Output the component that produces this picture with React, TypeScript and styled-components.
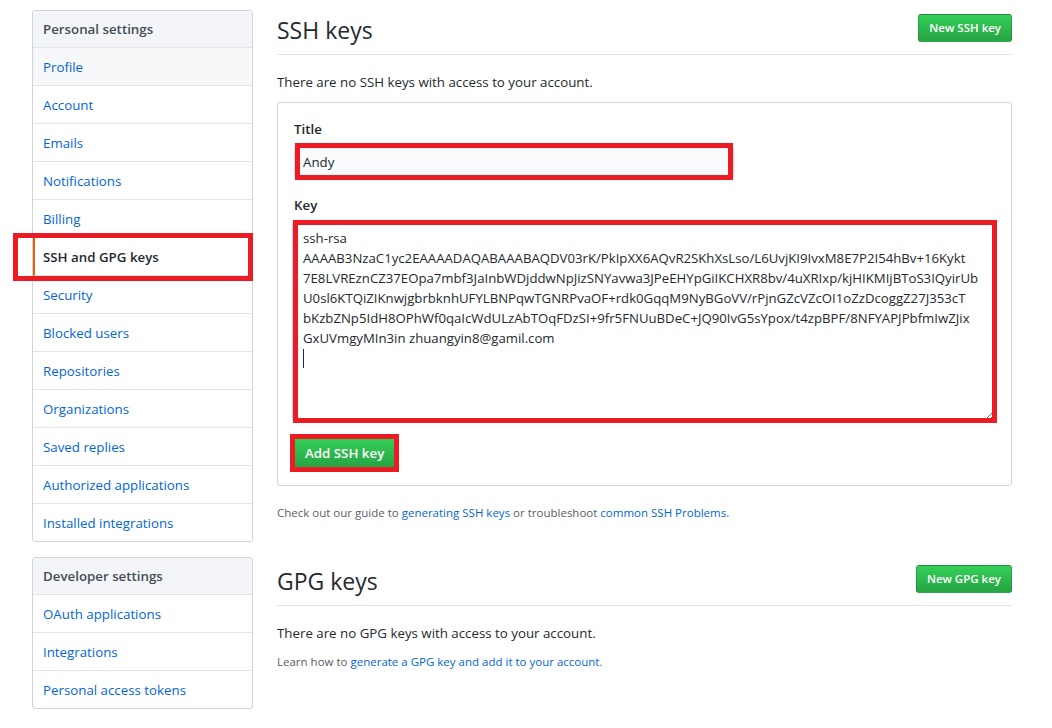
import React from "react";
import styled, { createGlobalStyle, css } from "styled-components";

const GlobalStyle = createGlobalStyle`
  html, body { margin: 0; padding: 0; background: #fff; }
  body {
    font-family: "Open Sans", "Liberation Sans", sans-serif;
    font-size: 13.3px;
    line-height: 21px;
    color: #24292e;
  }
  * { box-sizing: border-box; }
`;

const Page = styled.div`
  display: flex;
  align-items: flex-start;
  gap: 24px;
  padding: 10px 0 0 32px;
`;

const Sidebar = styled.nav`
  width: 221px;
  display: flex;
  flex-direction: column;
  gap: 15px;
`;

const Menu = styled.div`
  border: 1px solid #d1d5da;
  border-radius: 3px;
  background: #fff;
`;

const MenuHeading = styled.div`
  padding: 8px 10px 7px;
  line-height: 21px;
  font-weight: 600;
  color: #444d56;
  background: #f3f5f8;
  border-bottom: 1px solid #e1e4e8;
  border-radius: 3px 3px 0 0;
`;

const MenuItem = styled.a<{ $selected?: boolean; $hover?: boolean }>`
  position: relative;
  display: block;
  padding: 9px 10px 7px;
  line-height: 21px;
  color: #0366d6;
  text-decoration: none;
  border-bottom: 1px solid #e1e4e8;
  &:last-child { border-bottom: 0; border-radius: 0 0 3px 3px; }
  ${(p) => p.$hover && css`background: #f6f8fa;`}
  ${(p) =>
    p.$selected &&
    css`
      color: #24292e;
      font-weight: 600;
      padding-left: 8px;
      border-left: 2px solid #e36209;
    `}
`;

const Highlight = styled.span<{ $t: number; $r: number; $b: number; $l: number }>`
  position: absolute;
  top: ${(p) => p.$t}px;
  right: ${(p) => p.$r}px;
  bottom: ${(p) => p.$b}px;
  left: ${(p) => p.$l}px;
  border: 5px solid #ed1c24;
  pointer-events: none;
  z-index: 2;
`;

const Main = styled.main`
  width: 735px;
`;

const Subhead = styled.div<{ $spacious?: boolean }>`
  display: flex;
  align-items: flex-start;
  justify-content: space-between;
  padding-bottom: 9px;
  border-bottom: 1px solid #e1e4e8;
  margin-bottom: 17px;
  ${(p) => p.$spacious && css`margin-top: 39px;`}
`;

const Heading = styled.h2`
  margin: 5px 0 0;
  font-size: 23px;
  line-height: 30px;
  font-weight: 400;
  color: #24292e;
`;

const GreenButton = styled.button<{ $small?: boolean }>`
  position: relative;
  font-family: inherit;
  font-weight: 600;
  color: #fff;
  border: 1px solid rgba(27, 31, 35, 0.2);
  border-radius: 3px;
  background-image: linear-gradient(-180deg, #34d058 0%, #28a745 90%);
  cursor: pointer;
  white-space: nowrap;
  ${(p) =>
    p.$small
      ? css`
          margin-top: 4px;
          font-size: 11.5px;
          line-height: 20px;
          padding: 3px 10px;
        `
      : css`
          font-size: 13.3px;
          line-height: 20px;
          padding: 5px 10px;
        `}
`;

const Note = styled.p`
  margin: 0 0 9px;
`;

const SmallNote = styled.p`
  margin: 0;
  font-size: 11.5px;
  line-height: 18px;
  color: #586069;
  a { color: #0366d6; text-decoration: none; }
`;

const FormBox = styled.form`
  border: 1px solid #d1d5da;
  border-radius: 3px;
  padding: 16px;
  margin: 0 0 18px;
`;

const FormGroup = styled.div`
  margin-bottom: 16px;
`;

const Label = styled.label`
  display: block;
  font-weight: 600;
  line-height: 21px;
  margin-bottom: 6px;
`;

const FieldWrap = styled.div<{ $inline?: boolean }>`
  position: relative;
  display: ${(p) => (p.$inline ? "inline-block" : "block")};
`;

const TextInput = styled.input`
  display: block;
  width: 440px;
  height: 33px;
  padding: 5px 8px 7px;
  font-family: inherit;
  font-size: 13.3px;
  line-height: 20px;
  color: #24292e;
  background: #fafbfc;
  border: 1px solid #d1d5da;
  border-radius: 3px;
  box-shadow: inset 0 1px 2px rgba(27, 31, 35, 0.075);
  outline: none;
`;

const KeyArea = styled.textarea`
  display: block;
  width: 701px;
  height: 199px;
  padding: 5px 8px 7px;
  font-family: inherit;
  font-size: 13.2px;
  line-height: 20px;
  color: #24292e;
  background: #fff;
  border: 1px solid #2188ff;
  border-radius: 3px;
  box-shadow: inset 0 1px 2px rgba(27, 31, 35, 0.075), 0 0 0 2px rgba(3, 102, 214, 0.3);
  outline: none;
  white-space: pre;
  overflow: hidden;
  resize: vertical;
`;

const Caret = styled.span`
  position: absolute;
  left: 9px;
  top: 127px;
  width: 1px;
  height: 19px;
  background: #24292e;
`;

const KEY = [
  "ssh-rsa",
  "AAAAB3NzaC1yc2EAAAADAQABAAABAQDV03rK/PkIpXX6AQvR2SKhXsLso/L6UvjKI9IvxM8E7P2I54hBv+16Kykt",
  "7E8LVREznCZ37EOpa7mbf3JaInbWDjddwNpJizSNYavwa3JPeEHYpGiIKCHXR8bv/4uXRIxp/kjHIKMIjBToS3IQyirUb",
  "U0sl6KTQiZIKnwjgbrbknhUFYLBNPqwTGNRPvaOF+rdk0GqqM9NyBGoVV/rPjnGZcVZcOI1oZzDcoggZ27J353cT",
  "bKzbZNp5IdH8OPhWf0qaIcWdULzAbTOqFDzSI+9fr5FNUuBDeC+JQ90IvG5sYpox/t4zpBPF/8NFYAPJPbfmIwZJix",
  "GxUVmgyMIn3in zhuangyin8@gamil.com",
  "",
].join("\n");

const personal = [
  "Profile",
  "Account",
  "Emails",
  "Notifications",
  "Billing",
  "SSH and GPG keys",
  "Security",
  "Blocked users",
  "Repositories",
  "Organizations",
  "Saved replies",
  "Authorized applications",
  "Installed integrations",
];

const developer = ["OAuth applications", "Integrations", "Personal access tokens"];

export default function App() {
  return (
    <>
      <GlobalStyle />
      <Page>
        <Sidebar>
          <Menu>
            <MenuHeading>Personal settings</MenuHeading>
            {personal.map((item) => {
              const selected = item === "SSH and GPG keys";
              return (
                <MenuItem key={item} href="#" $selected={selected} $hover={item === "Profile"}>
                  {item}
                  {selected && <Highlight $t={-5} $r={-1} $b={-6} $l={-22} />}
                </MenuItem>
              );
            })}
          </Menu>
          <Menu>
            <MenuHeading>Developer settings</MenuHeading>
            {developer.map((item) => (
              <MenuItem key={item} href="#">
                {item}
              </MenuItem>
            ))}
          </Menu>
        </Sidebar>

        <Main>
          <Subhead>
            <Heading>SSH keys</Heading>
            <GreenButton $small type="button">New SSH key</GreenButton>
          </Subhead>
          <Note>There are no SSH keys with access to your account.</Note>

          <FormBox onSubmit={(e) => e.preventDefault()}>
            <FormGroup>
              <Label htmlFor="title">Title</Label>
              <FieldWrap $inline>
                <TextInput id="title" defaultValue="Andy" />
                <Highlight $t={-3} $r={1} $b={-1} $l={1} />
              </FieldWrap>
            </FormGroup>
            <FormGroup>
              <Label htmlFor="key">Key</Label>
              <FieldWrap>
                <KeyArea id="key" defaultValue={KEY} spellCheck={false} />
                <Caret />
                <Highlight $t={-2} $r={-2} $b={-2} $l={-1} />
              </FieldWrap>
            </FormGroup>
            <GreenButton type="button">
              Add SSH key
              <Highlight $t={-4} $r={-5} $b={-4} $l={-5} />
            </GreenButton>
          </FormBox>

          <SmallNote>
            Check out our guide to <a href="#">generating SSH keys</a> or troubleshoot{" "}
            <a href="#">common SSH Problems</a>.
          </SmallNote>

          <Subhead $spacious>
            <Heading>GPG keys</Heading>
            <GreenButton $small type="button">New GPG key</GreenButton>
          </Subhead>
          <Note>There are no GPG keys with access to your account.</Note>
          <SmallNote>
            Learn how to <a href="#">generate a GPG key and add it to your account</a>.
          </SmallNote>
        </Main>
      </Page>
    </>
  );
}
